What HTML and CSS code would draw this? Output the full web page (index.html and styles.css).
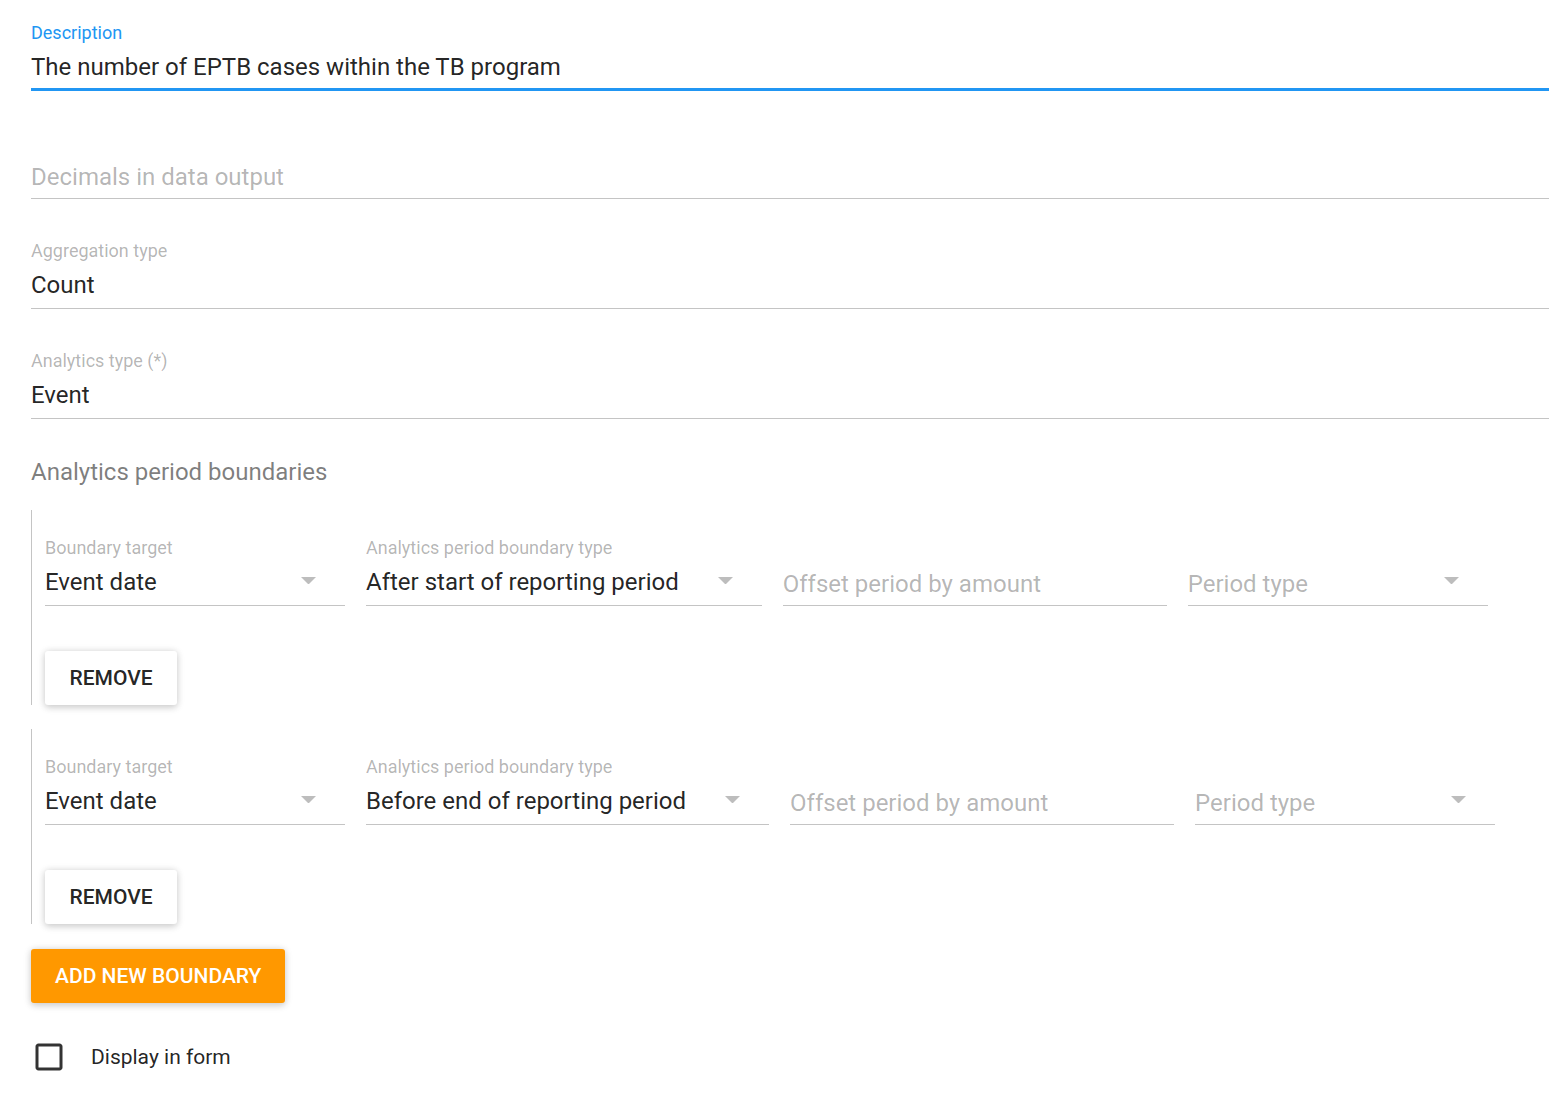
FILE: index.html
```html
<!DOCTYPE html>
<html lang="en">
<head>
<meta charset="utf-8">
<title>Program indicator</title>
<link rel="stylesheet" href="styles.css">
</head>
<body>
<div class="page">
  <div class="field field--focused">
    <div class="field-label">Description</div>
    <div class="field-value">The number of EPTB cases within the TB program</div>
  </div>

  <div class="field field--nolabel">
    <div class="field-value hint">Decimals in data output</div>
  </div>

  <div class="field">
    <div class="field-label">Aggregation type</div>
    <div class="field-value">Count</div>
  </div>

  <div class="field">
    <div class="field-label">Analytics type (*)</div>
    <div class="field-value">Event</div>
  </div>

  <h2 class="section-title">Analytics period boundaries</h2>

  <div class="boundary">
    <div class="boundary-fields">
      <div class="bfield bfield--w300">
        <div class="field-label">Boundary target</div>
        <div class="field-value select">
          <span class="select-text">Event date</span>
          <svg class="arrow" viewBox="0 0 10 5"><path d="M0 0l5 5 5-5z"/></svg>
        </div>
      </div>
      <div class="bfield">
        <div class="field-label">Analytics period boundary type</div>
        <div class="field-value select">
          <span class="select-text">After start of reporting period</span>
          <svg class="arrow" viewBox="0 0 10 5"><path d="M0 0l5 5 5-5z"/></svg>
        </div>
      </div>
      <div class="bfield bfield--w384">
        <div class="field-label"></div>
        <div class="field-value"><span class="hint hint--low">Offset period by amount</span></div>
      </div>
      <div class="bfield bfield--w300">
        <div class="field-label"></div>
        <div class="field-value select">
          <span class="select-text hint hint--low">Period type</span>
          <svg class="arrow" viewBox="0 0 10 5"><path d="M0 0l5 5 5-5z"/></svg>
        </div>
      </div>
    </div>
    <button class="btn" type="button">REMOVE</button>
  </div>

  <div class="boundary">
    <div class="boundary-fields">
      <div class="bfield bfield--w300">
        <div class="field-label">Boundary target</div>
        <div class="field-value select">
          <span class="select-text">Event date</span>
          <svg class="arrow" viewBox="0 0 10 5"><path d="M0 0l5 5 5-5z"/></svg>
        </div>
      </div>
      <div class="bfield">
        <div class="field-label">Analytics period boundary type</div>
        <div class="field-value select">
          <span class="select-text">Before end of reporting period</span>
          <svg class="arrow" viewBox="0 0 10 5"><path d="M0 0l5 5 5-5z"/></svg>
        </div>
      </div>
      <div class="bfield bfield--w384">
        <div class="field-label"></div>
        <div class="field-value"><span class="hint hint--low">Offset period by amount</span></div>
      </div>
      <div class="bfield bfield--w300">
        <div class="field-label"></div>
        <div class="field-value select">
          <span class="select-text hint hint--low">Period type</span>
          <svg class="arrow" viewBox="0 0 10 5"><path d="M0 0l5 5 5-5z"/></svg>
        </div>
      </div>
    </div>
    <button class="btn" type="button">REMOVE</button>
  </div>

  <button class="btn btn--primary" type="button">ADD NEW BOUNDARY</button>

  <label class="checkbox-row">
    <svg class="checkbox-icon" viewBox="0 0 24 24"><path d="M19 5v14H5V5h14m0-2H5c-1.11 0-2 .9-2 2v14c0 1.1.89 2 2 2h14c1.1 0 2-.9 2-2V5c0-1.1-.9-2-2-2z"/></svg>
    <span class="checkbox-label">Display in form</span>
  </label>
</div>
</body>
</html>
```

FILE: styles.css
```css
* {
  box-sizing: border-box;
}

html, body {
  margin: 0;
  background: #ffffff;
}

body {
  font-family: Roboto, "Noto Sans", Arial, sans-serif;
  color: rgba(0, 0, 0, 0.87);
}

.page {
  padding-left: 31px;
}

/* Text fields */
.field {
  padding-top: 40px;
  border-bottom: 1px solid #c4c4c4;
}

.field-label {
  height: 24px;
  margin-bottom: 4px;
  font-size: 18px;
  line-height: 24px;
  color: rgba(0, 0, 0, 0.3);
  white-space: nowrap;
}

.field-value {
  height: 36px;
  margin-bottom: 5px;
  font-size: 24px;
  line-height: 36px;
  white-space: nowrap;
}

.field--focused {
  padding-top: 21px;
  border-bottom: 3px solid #2196f3;
}

.field--focused .field-label {
  color: #2196f3;
}

.field--focused .field-value {
  margin-bottom: 3px;
}

.field--nolabel {
  padding-top: 68px;
}

.field--nolabel .field-value {
  margin-bottom: 3px;
}

.hint {
  color: rgba(0, 0, 0, 0.3);
}

.hint--low {
  line-height: 40px;
}

/* Section */
.section-title {
  margin: 35px 0 20px;
  font-size: 24px;
  line-height: 36px;
  font-weight: 400;
  color: rgba(0, 0, 0, 0.52);
}

/* Boundaries */
.boundary {
  border-left: 1px solid #c4c4c4;
  padding-left: 13px;
  padding-top: 26px;
}

.boundary + .boundary {
  margin-top: 24px;
}

.boundary-fields {
  display: flex;
  align-items: flex-start;
  gap: 21px;
}

.bfield {
  flex: none;
  border-bottom: 1px solid #c4c4c4;
}

.bfield--w300 {
  width: 300px;
}

.bfield--w384 {
  width: 384px;
}

.select {
  display: flex;
  align-items: flex-start;
}

.select-text {
  margin-right: 39px;
}

.arrow {
  flex: none;
  width: 15px;
  height: 7.5px;
  margin-top: 12.5px;
  margin-left: auto;
  margin-right: 29px;
  fill: #bdbdbd;
}

/* Buttons */
.btn {
  display: block;
  min-width: 132px;
  height: 54px;
  margin-top: 45px;
  padding: 0 24px;
  border: 0;
  border-radius: 3px;
  background: #ffffff;
  font-family: Roboto, "Noto Sans", Arial, sans-serif;
  font-size: 21px;
  font-weight: 500;
  line-height: 54px;
  color: rgba(0, 0, 0, 0.87);
  box-shadow: 0 1.5px 9px rgba(0, 0, 0, 0.12), 0 1.5px 6px rgba(0, 0, 0, 0.12);
  cursor: pointer;
}

.btn--primary {
  margin-top: 25px;
  background: #ff9800;
  color: #ffffff;
}

/* Checkbox */
.checkbox-row {
  display: flex;
  align-items: center;
  gap: 24px;
  margin-top: 36px;
  cursor: pointer;
}

.checkbox-icon {
  flex: none;
  width: 36px;
  height: 36px;
  fill: rgba(0, 0, 0, 0.8);
}

.checkbox-label {
  font-size: 21px;
  line-height: 36px;
}
```
